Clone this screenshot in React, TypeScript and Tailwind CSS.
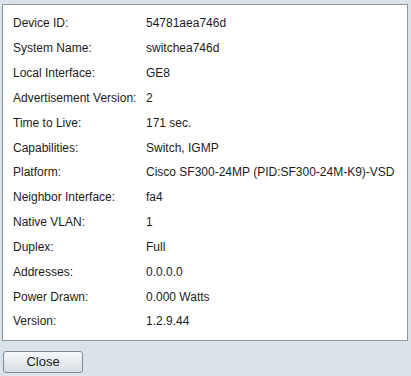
const rows: [string, string][] = [
  ["Device ID:", "54781aea746d"],
  ["System Name:", "switchea746d"],
  ["Local Interface:", "GE8"],
  ["Advertisement Version:", "2"],
  ["Time to Live:", "171 sec."],
  ["Capabilities:", "Switch, IGMP"],
  ["Platform:", "Cisco SF300-24MP (PID:SF300-24M-K9)-VSD"],
  ["Neighbor Interface:", "fa4"],
  ["Native VLAN:", "1"],
  ["Duplex:", "Full"],
  ["Addresses:", "0.0.0.0"],
  ["Power Drawn:", "0.000 Watts"],
  ["Version:", "1.2.9.44"],
];

const App = () => {
  return (
    <div className="w-[411px] h-[376px] bg-[#dbe3ea] pt-[4px] pl-[2px] font-['Liberation_Sans',Arial,sans-serif] text-[12px] text-[#1c1c1c]">
      {/* Detail panel */}
      <div className="w-[406px] h-[337px] bg-white border border-[#8c979d] pt-[6px] pl-[10px]">
        {rows.map(([label, value]) => (
          <div key={label} className="flex items-center h-[24.83px]">
            <span className="w-[133px] shrink-0 whitespace-nowrap">{label}</span>
            <span className="whitespace-nowrap">{value}</span>
          </div>
        ))}
      </div>

      {/* Footer */}
      <div className="pt-[10px] pl-[1px]">
        <button className="w-[80px] h-[22px] rounded-[3px] border border-[#7d8a93] bg-gradient-to-b from-[#f6f8fa] to-[#d6dde3] text-[13px] text-[#1c1c1c]">
          Close
        </button>
      </div>
    </div>
  );
};

export default App;
